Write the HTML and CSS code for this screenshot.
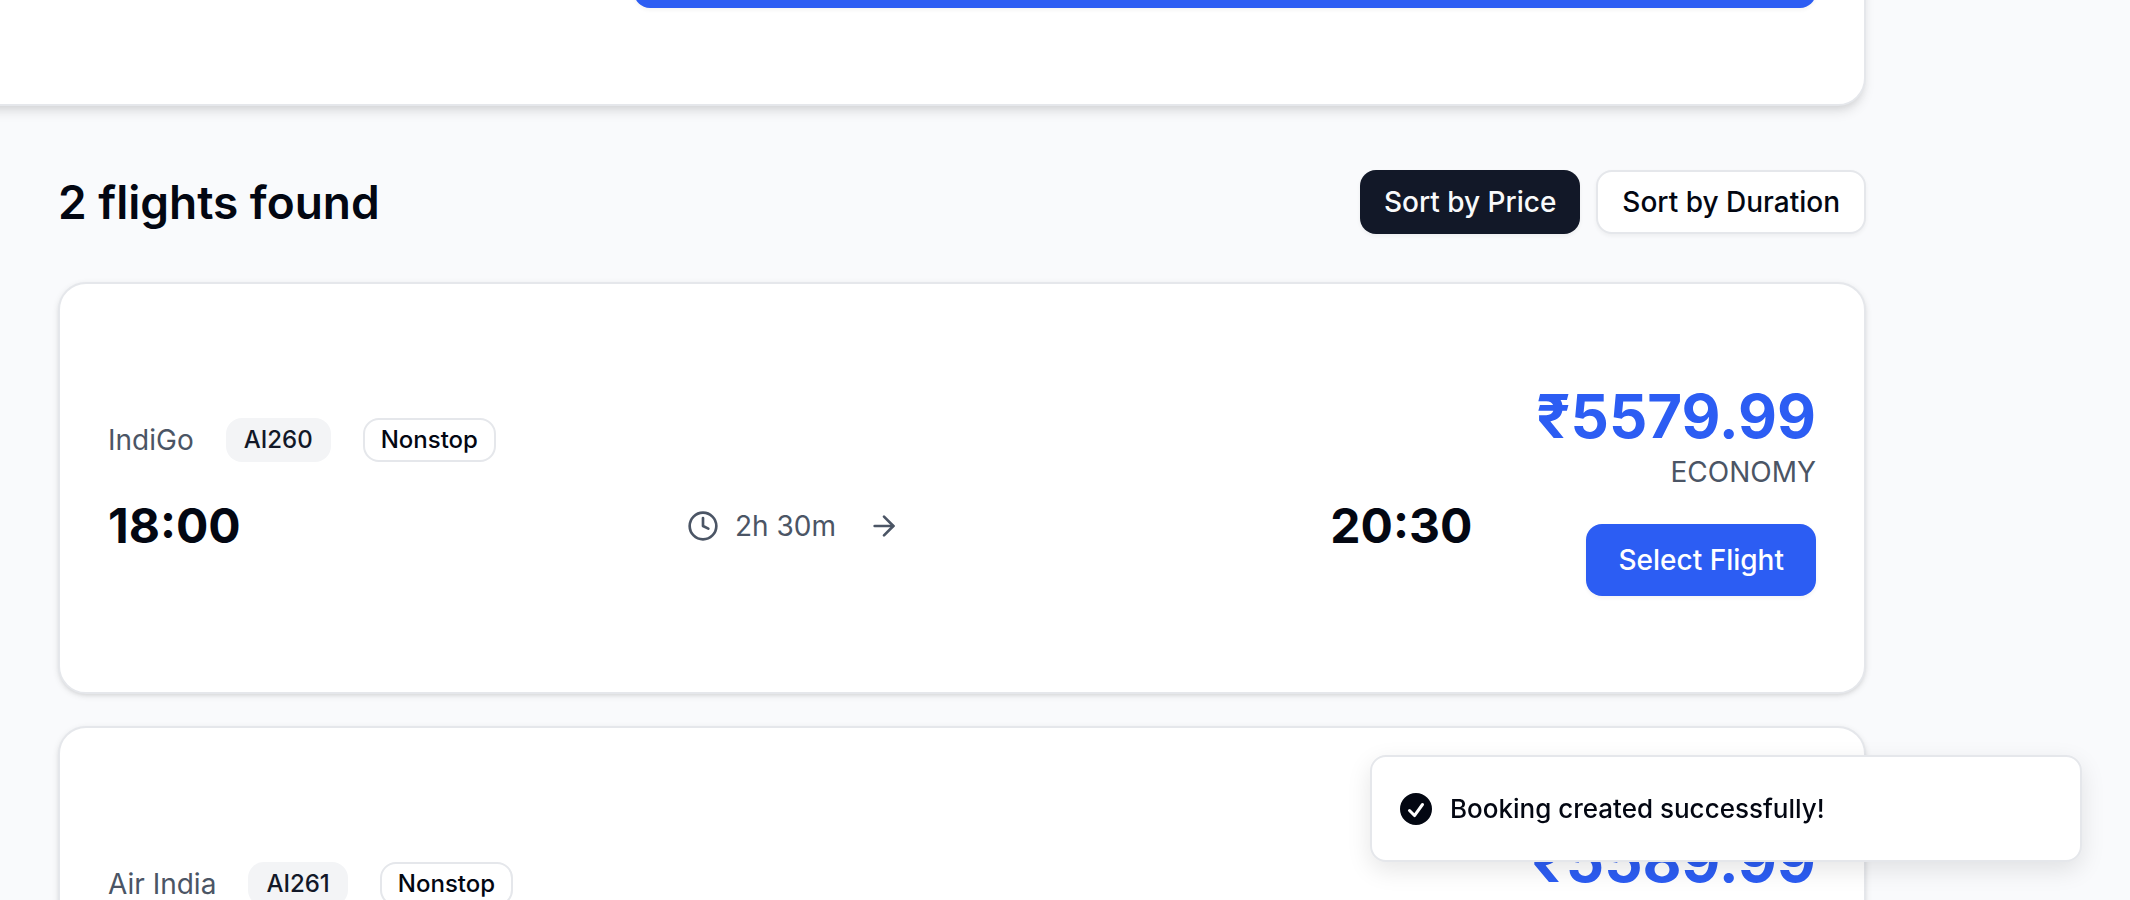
FILE: index.html
```html
<!DOCTYPE html>
<html lang="en">
<head>
<meta charset="utf-8">
<meta name="viewport" content="width=device-width, initial-scale=1">
<title>Flights</title>
<link rel="stylesheet" href="styles.css">
</head>
<body>
<main class="page">
  <section class="card search-card">
    <button class="btn btn-primary search-btn" type="button" aria-label="Search flights"></button>
  </section>

  <header class="results-header">
    <h2 class="results-title">2 flights found</h2>
    <div class="sort">
      <button class="btn btn-sm btn-dark" type="button">Sort by Price</button>
      <button class="btn btn-sm btn-outline" type="button">Sort by Duration</button>
    </div>
  </header>

  <div class="results">
    <article class="card flight">
      <div class="flight-main">
        <div class="flight-meta">
          <span class="muted">IndiGo</span>
          <span class="badge badge-soft">AI260</span>
          <span class="badge">Nonstop</span>
        </div>
        <div class="flight-times">
          <span class="time">18:00</span>
          <div class="duration">
            <span class="duration-label">
              <svg class="icon" viewBox="0 0 24 24" aria-hidden="true"><circle cx="12" cy="12" r="10"/><path d="M12 6v6l4 2"/></svg>
              <span>2h 30m</span>
            </span>
            <svg class="icon" viewBox="0 0 24 24" aria-hidden="true"><path d="M5 12h14"/><path d="m12 5 7 7-7 7"/></svg>
          </div>
          <span class="time">20:30</span>
        </div>
      </div>
      <div class="flight-fare">
        <div class="price">₹5579.99</div>
        <div class="muted">ECONOMY</div>
        <button class="btn btn-primary btn-select" type="button">Select Flight</button>
      </div>
    </article>

    <article class="card flight">
      <div class="flight-main">
        <div class="flight-meta">
          <span class="muted">Air India</span>
          <span class="badge badge-soft">AI261</span>
          <span class="badge">Nonstop</span>
        </div>
        <div class="flight-times"></div>
      </div>
      <div class="flight-fare">
        <div class="price">₹5589.99</div>
        <div class="muted"></div>
        <button class="btn btn-primary btn-select" type="button" aria-label="Select flight"></button>
      </div>
    </article>
  </div>
</main>

<div class="toast" role="status">
  <svg class="toast-icon" viewBox="0 0 20 20" aria-hidden="true"><path fill-rule="evenodd" clip-rule="evenodd" d="M10 18a8 8 0 100-16 8 8 0 000 16zm3.857-9.809a.75.75 0 00-1.214-.882l-3.483 4.79-1.88-1.88a.75.75 0 10-1.06 1.061l2.5 2.5a.75.75 0 001.137-.089l4-5.5z"/></svg>
  <span>Booking created successfully!</span>
</div>
</body>
</html>
```
FILE: styles.css
```css
:root {
  --bg: #f9fafc;
  --ink: #030712;
  --dark: #121828;
  --muted: #4b5565;
  --border: #e5e7eb;
  --blue: #2c5df3;
}

* { box-sizing: border-box; }

body {
  margin: 0;
  background: var(--bg);
  color: var(--ink);
  font-family: Inter, "Liberation Sans", sans-serif;
  font-size: 28px;
  line-height: 40px;
}

.page {
  height: 100vh;
  overflow: hidden;
  padding: 0 264px 0 58px;
}

.card {
  background: #fff;
  border: 2px solid var(--border);
  border-radius: 28px;
  padding: 96px 48px;
  box-shadow: 0 2px 6px rgba(0, 0, 0, .1), 0 2px 4px -2px rgba(0, 0, 0, .1);
}

/* The search form runs past the top and left edges of the view. */
.search-card {
  display: flex;
  margin: -162px 0 0 -96px;
  box-shadow: 0 8px 12px -2px rgba(0, 0, 0, .1), 0 4px 8px -4px rgba(0, 0, 0, .1);
}

.search-btn {
  flex: 1;
  margin-left: 622px;
}

.btn {
  height: 72px;
  padding: 0 32px;
  border: 0;
  border-radius: 16px;
  font: inherit;
  font-weight: 500;
  white-space: nowrap;
  cursor: pointer;
  box-shadow: 0 2px 4px rgba(0, 0, 0, .05);
}

.btn-sm { height: 64px; padding: 0 24px; }
.btn-primary { background: var(--blue); color: #fff; }
.btn-dark { background: var(--dark); color: #f9fafb; }
.btn-outline { background: #fff; color: var(--ink); border: 2px solid var(--border); }

.results-header {
  display: flex;
  align-items: center;
  justify-content: space-between;
  margin: 64px 0 48px;
}

.results-title {
  margin: 0;
  font-size: 46px;
  line-height: 64px;
  font-weight: 600;
}

.sort { display: flex; gap: 16px; }

.results { display: grid; gap: 32px; }

.flight {
  display: flex;
  align-items: center;
  gap: 64px;
}

.flight-main {
  flex: 1;
  display: grid;
  gap: 32px;
}

.flight-meta {
  display: flex;
  align-items: center;
  gap: 32px;
}

.muted { color: var(--muted); min-height: 40px; }

.badge {
  padding: 4px 16px;
  border: 2px solid var(--border);
  border-radius: 16px;
  font-size: 24px;
  line-height: 32px;
  font-weight: 500;
}

.badge-soft {
  background: #f3f4f6;
  border-color: transparent;
  color: var(--dark);
}

.flight-times {
  display: flex;
  align-items: center;
  min-height: 64px;
}

.time {
  font-size: 48px;
  line-height: 64px;
  font-weight: 700;
}

.duration {
  flex: 1;
  display: flex;
  align-items: center;
  justify-content: center;
  gap: 32px;
  padding-left: 16px;
  color: var(--muted);
}

.duration-label {
  display: flex;
  align-items: center;
  gap: 16px;
}

.icon {
  width: 32px;
  height: 32px;
  fill: none;
  stroke: currentColor;
  stroke-width: 2;
  stroke-linecap: round;
  stroke-linejoin: round;
}

.flight-fare {
  display: flex;
  flex-direction: column;
  align-items: flex-end;
}

.price {
  color: var(--blue);
  font-size: 60px;
  line-height: 72px;
  font-weight: 700;
}

.btn-select { margin-top: 32px; }

.toast {
  position: fixed;
  right: 48px;
  bottom: 38px;
  width: 712px;
  display: flex;
  align-items: center;
  gap: 14px;
  padding: 32px 24px 31px;
  background: #fff;
  border: 2px solid var(--border);
  border-radius: 16px;
  box-shadow: 0 8px 24px rgba(0, 0, 0, .1);
  font-size: 26px;
  font-weight: 500;
}

.toast-icon {
  width: 40px;
  height: 40px;
  fill: var(--ink);
}
```
